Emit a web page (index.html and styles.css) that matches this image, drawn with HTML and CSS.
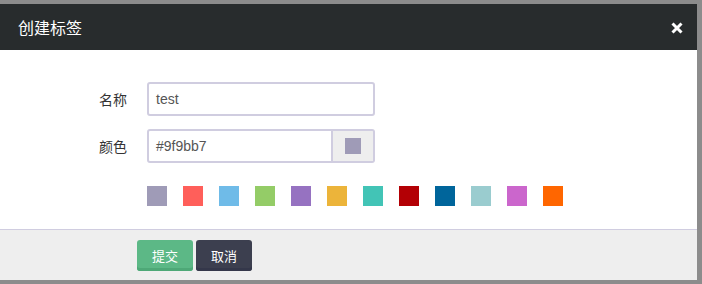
FILE: index.html
```html
<!DOCTYPE html>
<html lang="zh">
<head>
<meta charset="utf-8">
<link rel="stylesheet" href="styles.css">
</head>
<body>
<div class="dialog">
  <div class="header">
    <span class="title">创建标签</span>
    <svg class="close" width="12" height="12" viewBox="0 0 12 12"><path d="M1.5 1.5 L10.5 10.5 M10.5 1.5 L1.5 10.5" stroke="#fff" stroke-width="3" stroke-linecap="butt"/></svg>
  </div>
  <div class="body">
    <div class="row">
      <label class="label">名称</label>
      <div class="input">test</div>
    </div>
    <div class="row">
      <label class="label">颜色</label>
      <div class="group">
        <div class="input grouped">#9f9bb7</div>
        <div class="addon"><span class="chip"></span></div>
      </div>
    </div>
    <div class="swatches">
      <span class="sw" style="background:#9f9bb7"></span>
      <span class="sw" style="background:#ff5f5a"></span>
      <span class="sw" style="background:#6fbbe8"></span>
      <span class="sw" style="background:#94cc67"></span>
      <span class="sw" style="background:#9672c1"></span>
      <span class="sw" style="background:#ecb43a"></span>
      <span class="sw" style="background:#42c4b6"></span>
      <span class="sw" style="background:#b30005"></span>
      <span class="sw" style="background:#00659b"></span>
      <span class="sw" style="background:#9acccf"></span>
      <span class="sw" style="background:#cb66cc"></span>
      <span class="sw" style="background:#ff6600"></span>
    </div>
  </div>
  <div class="footer">
    <button class="btn ok">提交</button>
    <button class="btn cancel">取消</button>
  </div>
</div>
</body>
</html>
```
FILE: styles.css
```css
html, body { margin: 0; padding: 0; }
body {
  background: #8c8c8c;
  width: 702px;
  height: 284px;
  overflow: hidden;
  font-family: "Liberation Sans", "Noto Sans CJK SC", sans-serif;
}
.dialog {
  margin-top: 4px;
  width: 697px;
  background: #fff;
}
.header {
  height: 46px;
  background: #282c2d;
  display: flex;
  align-items: center;
  justify-content: space-between;
  padding: 0 14px 0 18px;
}
.title {
  color: #fff;
  font-size: 16px;
  font-family: "Noto Sans CJK SC", sans-serif;
}
.close { display: block; margin-top: 1px; }
.body {
  padding: 32px 0 25px 147px;
  height: 122px;
  box-sizing: content-box;
}
.row {
  position: relative;
  display: flex;
  align-items: center;
  height: 34px;
  margin-bottom: 13px;
}
.label {
  position: absolute;
  left: -48px;
  width: 28px;
  font-size: 14px;
  color: #333;
  font-family: "Noto Sans CJK SC", sans-serif;
}
.input {
  box-sizing: border-box;
  width: 228px;
  height: 34px;
  border: 2px solid #d0cde0;
  border-radius: 3px;
  padding: 0 7px;
  font-size: 14px;
  line-height: 30px;
  color: #555;
}
.group { display: flex; }
.input.grouped {
  width: 186px;
  border-radius: 3px 0 0 3px;
}
.addon {
  box-sizing: border-box;
  width: 42px;
  height: 34px;
  border: 2px solid #d0cde0;
  border-left: 0;
  border-radius: 0 3px 3px 0;
  background: #eee;
  display: flex;
  align-items: center;
  justify-content: center;
}
.chip {
  width: 16px;
  height: 16px;
  background: #9f9bb7;
}
.swatches {
  display: flex;
  gap: 16px;
  margin-top: 23px;
}
.sw {
  width: 20px;
  height: 20px;
}
.footer {
  border-top: 1px solid #d0cde0;
  background: #eee;
  height: 51px;
  padding-left: 137px;
  display: flex;
  gap: 3px;
  align-items: flex-start;
  padding-top: 10px;
  box-sizing: border-box;
}
.btn {
  width: 56px;
  height: 31px;
  border: 0;
  border-radius: 3px;
  color: #fff;
  font-size: 13px;
  font-family: "Noto Sans CJK SC", sans-serif;
  padding: 0;
}
.ok {
  background: #5cb886;
  box-shadow: inset 0 -3px 0 #4ea877;
}
.cancel {
  background: #3c3f4f;
  box-shadow: inset 0 -3px 0 #34374a;
}
```
